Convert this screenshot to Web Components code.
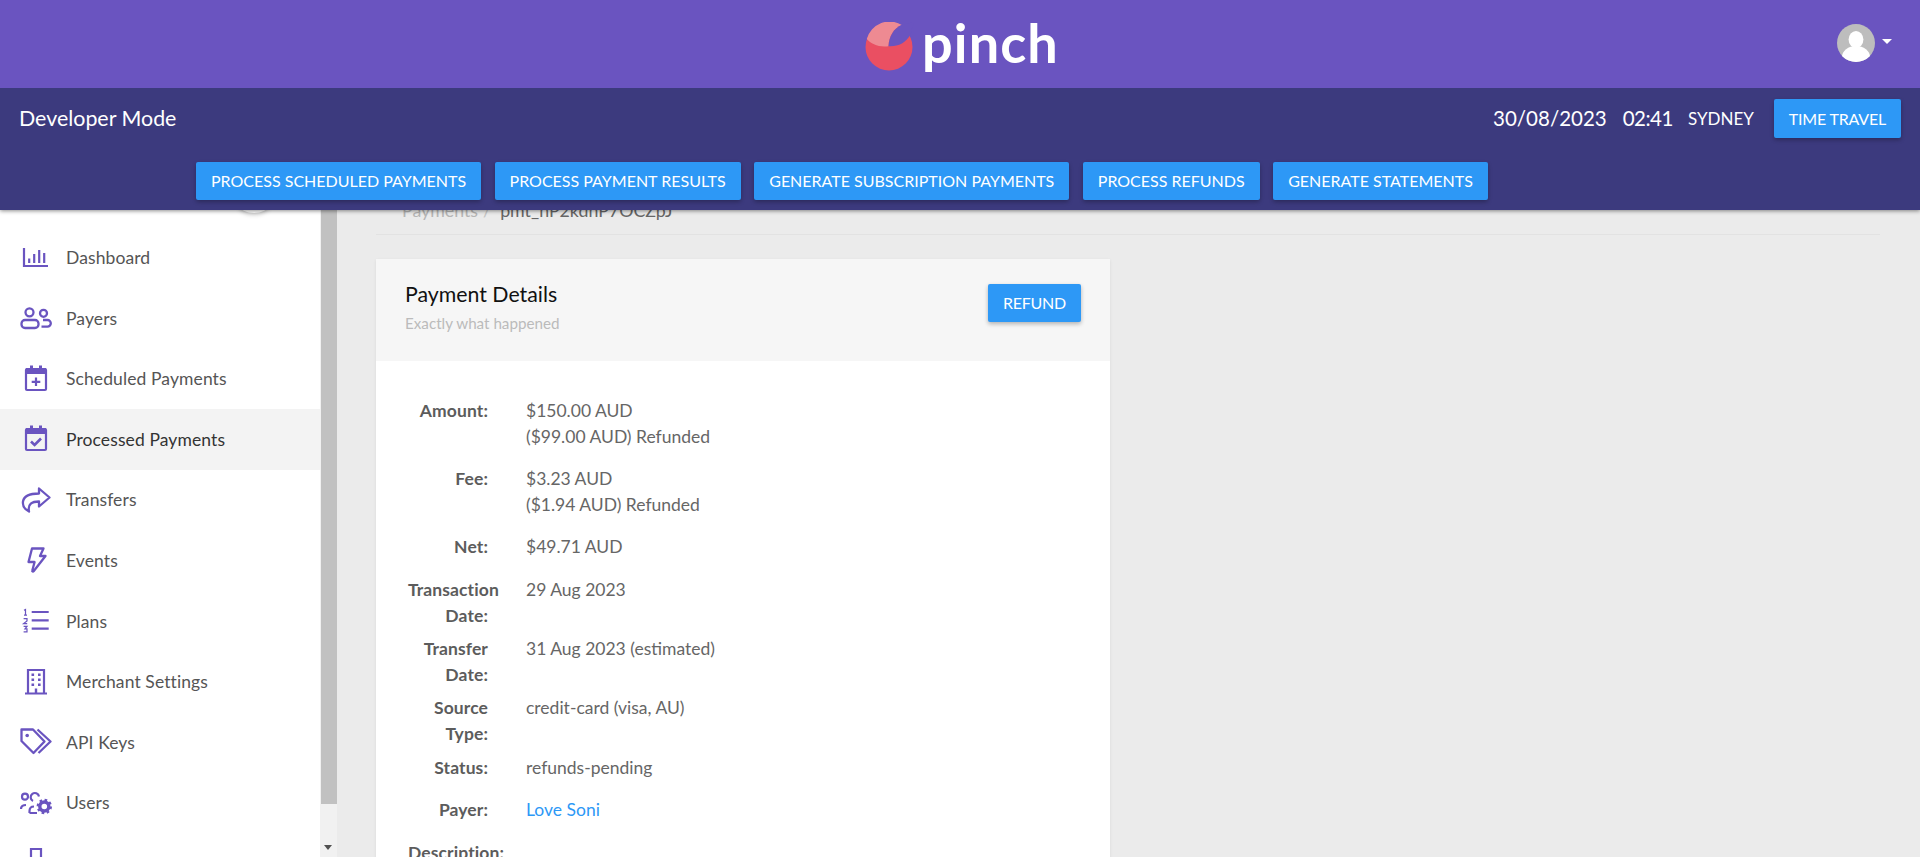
<!DOCTYPE html>
<html lang="en"><head><meta charset="utf-8"><title>Pinch</title>
<style>
html,body{margin:0;padding:0;height:100%;overflow:hidden}
body{font-family:Lato,"Open Sans",sans-serif;color:#555;background:#ebebeb}
</style></head>
<body>
<pinch-app>
  <top-bar slot="top"></top-bar>
  <dev-bar slot="top">
    <action-button slot="clock" style="letter-spacing:-.2px">TIME TRAVEL</action-button>
    <action-button>PROCESS SCHEDULED PAYMENTS</action-button>
    <action-button>PROCESS PAYMENT RESULTS</action-button>
    <action-button>GENERATE SUBSCRIPTION PAYMENTS</action-button>
    <action-button>PROCESS REFUNDS</action-button>
    <action-button>GENERATE STATEMENTS</action-button>
  </dev-bar>
  <side-nav slot="side">
    <nav-item icon="dashboard">Dashboard</nav-item>
    <nav-item icon="payers">Payers</nav-item>
    <nav-item icon="scheduled">Scheduled Payments</nav-item>
    <nav-item icon="processed" active>Processed Payments</nav-item>
    <nav-item icon="transfers">Transfers</nav-item>
    <nav-item icon="events">Events</nav-item>
    <nav-item icon="plans">Plans</nav-item>
    <nav-item icon="merchant">Merchant Settings</nav-item>
    <nav-item icon="keys">API Keys</nav-item>
    <nav-item icon="users">Users</nav-item>
    <nav-item icon="more"></nav-item>
  </side-nav>
  <bread-crumb><span slot="parent">Payments</span>pmt_nP2kdnP7OCZpJ</bread-crumb>
  <detail-card heading="Payment Details" sub="Exactly what happened">
    <action-button slot="action" style="letter-spacing:-.25px">REFUND</action-button>
    <detail-row label="Amount:">$150.00 AUD<br>($99.00 AUD) Refunded</detail-row>
    <detail-row label="Fee:">$3.23 AUD<br>($1.94 AUD) Refunded</detail-row>
    <detail-row label="Net:">$49.71 AUD</detail-row>
    <detail-row label="Transaction Date:">29 Aug 2023</detail-row>
    <detail-row label="Transfer Date:">31 Aug 2023 (estimated)</detail-row>
    <detail-row label="Source Type:">credit-card (visa, AU)</detail-row>
    <detail-row label="Status:">refunds-pending</detail-row>
    <detail-row label="Payer:"><a href="#" style="color:#2d98f6;text-decoration:none">Love Soni</a></detail-row>
    <detail-row label="Description:"></detail-row>
  </detail-card>
</pinch-app>
<script>
const C='#6a54c0';
const ICONS={
dashboard:`<path d="M4 7V25H28" fill="none" stroke="${C}" stroke-width="2.2"/><path d="M9.2 17.5V22M14.2 13V22M19.2 9V22M24.2 12V22" fill="none" stroke="${C}" stroke-width="2.2"/>`,
payers:`<g fill="none" stroke="${C}" stroke-width="2.3"><circle cx="9.5" cy="10.3" r="4"/><rect x="1.5" y="18" width="17" height="8" rx="3.5"/><circle cx="23.5" cy="11.3" r="3.5"/><path d="M23 18H27.5a3.2 3.2 0 0 1 0 6.6H21.5"/></g>`,
scheduled:`<g fill="none" stroke="${C}" stroke-width="2.2"><rect x="6" y="6" width="20" height="21" rx="1"/><path d="M16 14.5V23M11.7 18.8H20.3"/></g><path d="M6 5H26V11H6ZM10 2.5H13V6H10ZM19 2.5H22V6H19Z" fill="${C}"/>`,
processed:`<g fill="none" stroke="${C}" stroke-width="2.2"><rect x="6" y="6" width="20" height="21" rx="1"/><path d="M11 18.5L14.6 22L21 15.5" stroke-width="2.6"/></g><path d="M6 5H26V11H6ZM10 2.5H13V6H10ZM19 2.5H22V6H19Z" fill="${C}"/>`,
transfers:`<path d="M19 4.5L29.5 13.5L19 22.5V17.5C12 17.5 7.5 20 9 27.5C4 25 2.5 21 3 17.5C4 11.5 11 9.5 19 9.5Z" fill="none" stroke="${C}" stroke-width="2.3" stroke-linejoin="round"/>`,
events:`<path d="M12 4.5H23.5L20 12H25.5L13.8 27C13 28 12 27.5 12.3 26.5L14.6 18H8.5Z" fill="none" stroke="${C}" stroke-width="2.3" stroke-linejoin="round"/>`,
plans:`<path d="M11.7 7H28.7M11.7 15.4H28.7M11.7 23.7H28.7" stroke="${C}" stroke-width="2.2"/><path d="M4 5.2L5.5 4.4V10M4 10.2H7M3.6 13.6H7V16L3.6 18.6H7.2M3.6 21.4H7L5 23.8H7V26.8H3.6" fill="none" stroke="${C}" stroke-width="1.2"/>`,
merchant:`<path d="M8 27V4H24V27M5 27.5H27" fill="none" stroke="${C}" stroke-width="2.2"/><path d="M11.5 7.5h2.6v2.6h-2.6zM18 7.5h2.6v2.6h-2.6zM11.5 12.5h2.6v2.6h-2.6zM18 12.5h2.6v2.6h-2.6zM11.5 17.5h2.6v2.6h-2.6zM18 17.5h2.6v2.6h-2.6zM14.8 22.5h2.4v4.5h-2.4z" fill="${C}"/>`,
keys:`<g fill="none" stroke="${C}" stroke-width="2.3" stroke-linejoin="round"><path d="M1.5 3.5H13L24.5 15.5L13.5 27L1.5 15Z"/><path d="M17.5 3.5L30.5 15.5L18.5 27"/></g><circle cx="7.2" cy="9.5" r="1.8" fill="${C}"/>`,
users:`<g fill="none" stroke="${C}" stroke-width="2.2"><circle cx="5" cy="9.7" r="3"/><path d="M1 22C1 19.5 3 18 6 18"/><path d="M19 9.5A4.2 4.2 0 1 0 13 14"/><path d="M9.5 26V24C9.5 21 11 19.5 14 19.5M9.5 26H17"/></g><circle cx="24.3" cy="19.5" r="4.5" fill="none" stroke="${C}" stroke-width="3.4"/><circle cx="24.3" cy="19.5" r="6.6" fill="none" stroke="${C}" stroke-width="2.2" stroke-dasharray="2.6 2.6"/>`,
more:`<path d="M11 12V2H21V12" fill="none" stroke="${C}" stroke-width="2.2"/>`
};
function def(name,html,extra){
  const t=document.createElement('template');t.innerHTML=html;
  customElements.define(name,class extends HTMLElement{
    constructor(){super();this.attachShadow({mode:'open'}).appendChild(t.content.cloneNode(true))}
    connectedCallback(){extra&&extra(this,this.shadowRoot)}
  });
}
def('pinch-app',`<style>
:host{display:flex;flex-direction:column;height:100vh;overflow:hidden}
.top{position:relative;z-index:3;display:block;box-shadow:0 1px 4px rgba(0,0,0,.45)}
.row{flex:1;min-height:0;display:flex;overflow:hidden}
main{flex:1;min-width:0;padding:0 40px 0 39px;background:#ebebeb}
</style><div class="top"><slot name="top"></slot></div><div class="row"><slot name="side"></slot><main><slot></slot></main></div>`);
def('top-bar',`<style>
:host{display:flex;height:88px;background:#6a54c0;align-items:center;justify-content:center;position:relative}
.logo{display:flex;align-items:center;gap:8px;margin-left:3px}
svg.mark{margin-top:5px}
.word{font:700 54px/88px Lato,sans-serif;color:#fff;letter-spacing:1.1px;position:relative;top:-1px}
.user{position:absolute;right:28px;top:24px;display:flex;align-items:center;gap:7px}
.caret{width:0;height:0;border:5px solid transparent;border-top:5px solid #fff;border-bottom:0;margin-top:-4px}
</style><div class="logo"><svg class="mark" width="50" height="50" viewBox="0 0 50 50"><circle cx="25" cy="25" r="23.5" fill="#ea4f62"/><path d="M37.8 3A23.5 23.5 0 0 0 2.8 17C7 22 15 25.5 24.5 24.2C25 14 30 6 37.8 3Z" fill="#ee8a92"/><path d="M37.8 3C30 6 25 14 24.5 24.2C33 25 42 21 46.2 13L50 0Z" fill="#6a54c0"/></svg><span class="word">pinch</span></div>
<div class="user"><svg width="38" height="38" viewBox="0 0 38 38"><circle cx="19" cy="19" r="19" fill="#bdbdbd"/><clipPath id="c"><circle cx="19" cy="19" r="19"/></clipPath><g clip-path="url(#c)" fill="#fff"><ellipse cx="19" cy="15.5" rx="7.4" ry="8.6"/><ellipse cx="19" cy="33" rx="14" ry="11"/></g></svg><span class="caret"></span></div>`);
def('dev-bar',`<style>
:host{display:block;height:121.5px;background:#3c3a7e;color:#fff;box-sizing:border-box;padding-top:11px}
.first{display:flex;align-items:center;height:38.5px;padding:0 19px}
.title{font-size:21.4px;flex:1}
.date{font-size:20.5px;margin-right:16px}
.time{letter-spacing:-.5px;margin-right:15px}
.zone{font-size:17px;margin:0 20px 0 0}
.btns{display:flex;gap:13.5px;padding:24px 0 0 196px}
</style><div class="first"><span class="title">Developer Mode</span><span class="date">30/08/2023</span><span class="date time">02:41</span><span class="zone">SYDNEY</span><slot name="clock"></slot></div><div class="btns"><slot></slot></div>`);
def('action-button',`<style>
:host{display:inline-flex;align-items:center;height:38.5px;padding:0 15px;background:#2d98f6;color:#fff;font:400 16px Lato,sans-serif;border-radius:2px;box-shadow:0 2px 4px rgba(0,0,0,.28);white-space:nowrap;box-sizing:border-box}
</style><slot></slot>`);
def('side-nav',`<style>
:host{display:flex;width:337px;flex:none;position:relative;overflow:hidden;background:#fff}
nav{width:320px;box-sizing:border-box;padding-top:17.7px;flex:none}
.track{width:17px;background:#f1f1f1;position:relative;flex:none}
.thumb{height:594.5px;margin-left:1px;background:#c1c1c1}
.arrow{position:absolute;left:4px;bottom:7px;width:0;height:0;border:4.5px solid transparent;border-top:5px solid #505050;border-bottom:0}
.bump{position:absolute;left:240px;top:-11px;width:28px;height:14px;border-radius:50%;background:#fff;box-shadow:0 1px 5px rgba(0,0,0,.3)}
</style><nav><slot></slot></nav><div class="track"><div class="thumb"></div><span class="arrow"></span></div><div class="bump"></div>`);
def('nav-item',`<style>
:host{display:flex;align-items:center;height:60.6px;gap:14px;padding-left:20px;font-size:17.5px;letter-spacing:.1px;color:#555}
:host([active]){background:#f3f3f3;color:#333}
svg{width:32px;height:32px;flex:none}
</style><svg viewBox="0 0 32 32"></svg><span><slot></slot></span>`,(h,s)=>{s.querySelector('svg').innerHTML=ICONS[h.getAttribute('icon')]||''});
def('bread-crumb',`<style>
:host{display:block;margin-top:-12.5px;height:37px;border-bottom:1px solid #e2e2e2;font-size:17.8px;line-height:26px;color:#666}
.p{color:#b5b5b5}.s{color:#c4c4c4;margin:0 9px 0 5px}
b{font-weight:400;margin-left:26px}
</style><b><span class="p"><slot name="parent"></slot></span><span class="s">/</span><slot></slot></b>`);
def('detail-card',`<style>
:host{display:block;width:734px;margin-top:23.5px;background:#fff;box-shadow:0 1px 3px rgba(0,0,0,.08)}
header{height:102px;box-sizing:border-box;background:#f6f6f6;padding:22px 29px 0;display:flex;align-items:flex-start;justify-content:space-between}
h2{margin:0;font:400 21.3px/26px Lato,sans-serif;color:#111}
p{margin:7px 0 0;font-size:15.2px;line-height:18px;color:#bbb}
.body{padding:37.5px 32px 0}
::slotted([slot=action]){margin-top:3px}
</style><header><div><h2></h2><p></p></div><slot name="action"></slot></header><div class="body"><slot></slot></div>`,(h,s)=>{s.querySelector('h2').textContent=h.getAttribute('heading');s.querySelector('p').textContent=h.getAttribute('sub')});
def('detail-row',`<style>
:host{display:flex;gap:38px;font-size:17.5px;line-height:25.6px;color:#666}
.l{width:80px;flex:none;text-align:right;font-weight:700;letter-spacing:.1px;color:#5c5c5c;margin-bottom:8px}
.v{margin-bottom:17px;min-height:25.6px}
</style><div class="l"></div><div class="v"><slot></slot></div>`,(h,s)=>{s.querySelector('.l').textContent=h.getAttribute('label')});
</script>
</body></html>
